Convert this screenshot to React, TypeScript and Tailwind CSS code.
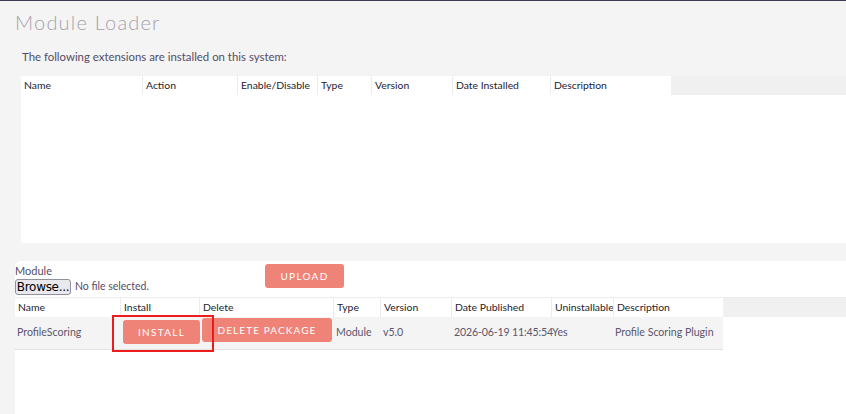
import React from "react";

const cols1: [string, number][] = [
  ["Name", 121],
  ["Action", 95],
  ["Enable/Disable", 80],
  ["Type", 54],
  ["Version", 81],
  ["Date Installed", 98],
  ["Description", 121],
];

const cols2: [string, number][] = [
  ["Name", 105],
  ["Install", 79],
  ["Delete", 134],
  ["Type", 47],
  ["Version", 71],
  ["Date Published", 100],
  ["Uninstallable", 62],
  ["Description", 110],
];

function HeaderRow({ cols }: { cols: [string, number][] }) {
  return (
    <div className="flex h-[19px] bg-[#f0f0f0]">
      {cols.map(([label, w], i) => (
        <div
          key={label + i}
          style={{ width: w }}
          className={`bg-white shrink-0 pl-[3px] text-[10.4px] leading-[19px] text-[#24232f] whitespace-nowrap ${i > 0 ? "border-l border-[#ececec]" : ""}`}
        >
          {label}
        </div>
      ))}
      <div className="flex-1" />
    </div>
  );
}

export default function App() {
  return (
    <div className="w-[846px] h-[414px] overflow-hidden bg-[#f4f4f4] border-t border-[#3d3b4f] font-['Lato',sans-serif]">
      <div className="pl-[15px] pt-[9px] text-[20px] leading-[24px] font-light tracking-[1.2px] text-[#a5a1ab]">
        Module Loader
      </div>
      <div className="pl-[22px] pt-[16px] text-[11.4px] leading-[14px] text-[#534d64]">
        The following extensions are installed on this system:
      </div>
      <div className="ml-[21px] mt-[12px]">
        <HeaderRow cols={cols1} />
        <div className="h-[148px] bg-white" />
      </div>
      <div className="ml-[15px] mt-[18px] bg-white rounded-tl-[6px] h-[200px]">
        <div className="flex items-start">
          <div className="w-[250px] pt-[4px]">
            <div className="text-[11px] leading-[12px] text-[#534d64]">Module</div>
            <div className="flex items-center mt-[2px]">
              <button className="h-[16px] w-[56px] rounded-[3px] border border-[#8f8f9d] bg-[#e9e9ed] text-[12px] leading-[14px] text-black font-['DejaVu_Sans',sans-serif] tracking-[-0.3px]">
                Browse...
              </button>
              <span className="ml-[4px] text-[10.5px] text-[#534d64]">No file selected.</span>
            </div>
          </div>
          <button className="mt-[3px] h-[24px] w-[79px] rounded-[3px] bg-[#f08377] text-white text-[10px] tracking-[1.3px]">
            UPLOAD
          </button>
        </div>
        <div className="mt-[2px] border-t border-[#ececec]">
          <HeaderRow cols={cols2} />
          <div className="flex">
            <div className="flex h-[33px] items-center bg-[#f4f4f4] border-b border-[#e2e2e2] text-[10.6px] text-[#5b566c]">
              <div className="w-[105px] pl-[2px]">ProfileScoring</div>
              <div className="w-[79px] pl-[3px] self-start pt-[3px]">
                <div className="relative">
                  <button className="h-[24px] w-[77px] rounded-[3px] bg-[#f08377] text-white text-[10px] tracking-[1.3px]">
                    INSTALL
                  </button>
                  <div className="absolute left-[-11px] top-[-5px] w-[102px] h-[37px] border-2 border-[#ec1c1c]" />
                </div>
              </div>
              <div className="w-[134px] pl-[3px] self-start pt-[1px]">
                <button className="h-[24px] w-[130px] rounded-[3px] bg-[#f08377] text-white text-[10px] tracking-[1.1px] whitespace-nowrap">
                  DELETE PACKAGE
                </button>
              </div>
              <div className="w-[47px] pl-[3px]">Module</div>
              <div className="w-[71px] pl-[3px]">v5.0</div>
              <div className="w-[100px] pl-[3px] whitespace-nowrap tracking-[-0.15px]">2026-06-19 11:45:54</div>
              <div className="w-[62px] pl-[1px]">Yes</div>
              <div className="w-[110px] pl-[2px] whitespace-nowrap">Profile Scoring Plugin</div>
            </div>
          </div>
        </div>
      </div>
    </div>
  );
}
